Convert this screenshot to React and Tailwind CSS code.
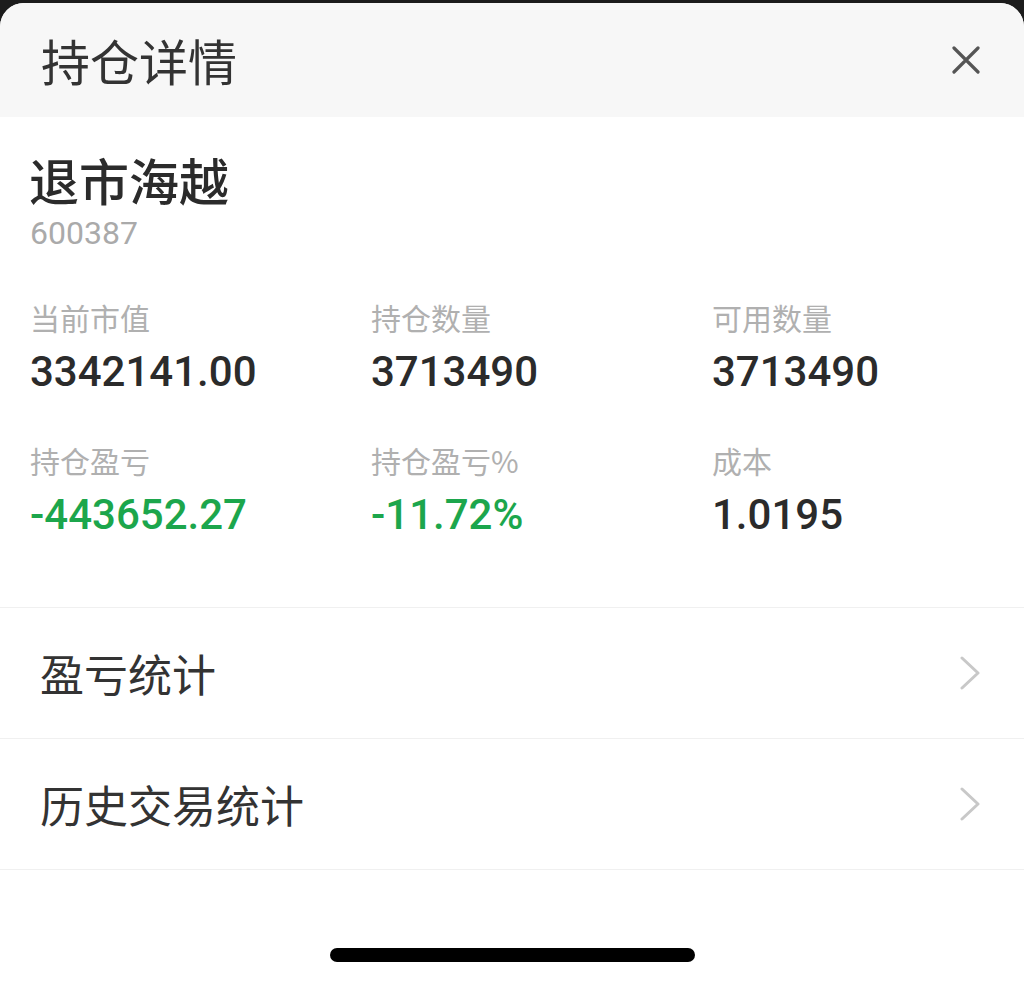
import React from 'react';

const stats = [
  { label: '当前市值', value: '3342141.00' },
  { label: '持仓数量', value: '3713490' },
  { label: '可用数量', value: '3713490' },
  { label: '持仓盈亏', value: '-443652.27', down: true },
  { label: '持仓盈亏%', value: '-11.72%', down: true },
  { label: '成本', value: '1.0195' },
];

const links = ['盈亏统计', '历史交易统计'];

function Chevron() {
  return (
    <svg width="24" height="34" viewBox="0 0 24 34" fill="none">
      <path d="M4 2 L20 17 L4 32" stroke="#c8c8c8" strokeWidth="3" strokeLinecap="round" strokeLinejoin="round" />
    </svg>
  );
}

export default function App() {
  return (
    <div className="w-[1024px] h-[983px] bg-[#1c1c1c] overflow-hidden font-['Roboto','Noto_Sans_CJK_SC',sans-serif]">
      <div className="mt-[3px] h-[980px] bg-white rounded-t-[24px] overflow-hidden flex flex-col">
        {/* header */}
        <div className="h-[114px] bg-[#f7f7f7] flex items-center justify-between pl-[41px] pr-[44px]">
          <h1 className="text-[49px] leading-none text-[#333] font-['Noto_Sans_CJK_SC',sans-serif] -mt-[2px]">持仓详情</h1>
          <svg width="28" height="28" viewBox="0 0 28 28" fill="none">
            <path d="M2 2 L26 26 M26 2 L2 26" stroke="#555" strokeWidth="3.2" strokeLinecap="round" />
          </svg>
        </div>

        {/* stock info */}
        <div className="px-[30px] pt-[32px] pb-[67px] border-b border-[#f0f0f0]">
          <div className="text-[50px] leading-[60px] font-medium text-[#2b2b2b] font-['Noto_Sans_CJK_SC',sans-serif] -ml-[1px]">退市海越</div>
          <div className="text-[32px] leading-[36px] text-[#aaa] mt-[6px]">600387</div>

          <div className="grid grid-cols-[341px_341px_1fr] gap-y-[45px] mt-[48px]">
            {stats.map((s) => (
              <div key={s.label} className="flex flex-col">
                <span className="text-[30px] leading-[36px] text-[#b0b0b0] font-['Noto_Sans_CJK_SC',sans-serif]">{s.label}</span>
                <span className={`text-[42px] leading-[50px] font-medium mt-[12px] ${s.down ? 'text-[#1ca64c]' : 'text-[#2b2b2b]'}`}>
                  {s.value}
                </span>
              </div>
            ))}
          </div>
        </div>

        {/* links */}
        {links.map((t) => (
          <div key={t} className="h-[131px] flex items-center justify-between pl-[40px] pr-[42px] border-b border-[#f0f0f0]">
            <span className="text-[44px] leading-none text-[#333] font-['Noto_Sans_CJK_SC',sans-serif]">{t}</span>
            <Chevron />
          </div>
        ))}

        <div className="flex-1 flex items-end justify-center pb-[21px]">
          <div className="w-[365px] h-[14px] bg-black rounded-full" />
        </div>
      </div>
    </div>
  );
}
